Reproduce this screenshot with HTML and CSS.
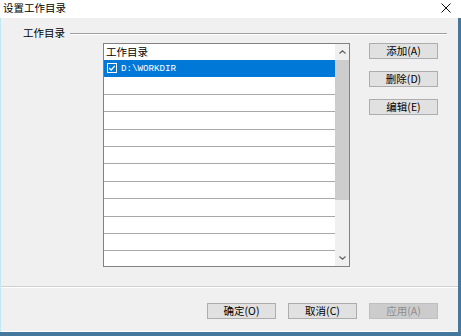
FILE: index.html
```html
<!DOCTYPE html>
<html>
<head>
<meta charset="utf-8">
<link rel="stylesheet" href="styles.css">
</head>
<body>
<div class="window">
  <div class="titlebar">
    <span class="title">设置工作目录</span>
    <svg class="close" width="10" height="10" viewBox="0 0 10 10"><path d="M0.5 0.5 L9.5 9.5 M9.5 0.5 L0.5 9.5" stroke="#111" stroke-width="1" fill="none"/></svg>
  </div>
  <div class="client">
    <div class="main">
      <div class="group-head"><span class="group-label">工作目录</span><div class="group-line"></div></div>
      <div class="content">
        <div class="listbox">
          <div class="list">
            <div class="list-header">工作目录</div>
            <div class="rows">
              <div class="row selected">
                <svg class="check" width="10" height="10" viewBox="0 0 10 10"><rect x="0.5" y="0.5" width="9" height="9" fill="#0078d7" stroke="#fff" stroke-width="1"/><path d="M2.2 5 L4.2 7 L7.8 2.8" stroke="#fff" stroke-width="1.3" fill="none"/></svg>
                <span class="path">D:\WORKDIR</span>
              </div>
              <div class="row"></div>
              <div class="row"></div>
              <div class="row"></div>
              <div class="row"></div>
              <div class="row"></div>
              <div class="row"></div>
              <div class="row"></div>
              <div class="row"></div>
              <div class="row"></div>
              <div class="row"></div>
              <div class="row"></div>
            </div>
          </div>
          <div class="scrollbar">
            <div class="sb-btn"><svg width="7" height="4" viewBox="0 0 7 4"><path d="M0.5 3.5 L3.5 0.8 L6.5 3.5" stroke="#606060" stroke-width="1.2" fill="none"/></svg></div>
            <div class="sb-track"><div class="sb-thumb"></div></div>
            <div class="sb-btn"><svg width="7" height="4" viewBox="0 0 7 4"><path d="M0.5 0.5 L3.5 3.2 L6.5 0.5" stroke="#606060" stroke-width="1.2" fill="none"/></svg></div>
          </div>
        </div>
        <div class="side-buttons">
          <div class="btn">添加(A)</div>
          <div class="btn">删除(D)</div>
          <div class="btn">编辑(E)</div>
        </div>
      </div>
    </div>
    <div class="separator"></div>
    <div class="footer">
      <div class="btn">确定(O)</div>
      <div class="btn">取消(C)</div>
      <div class="btn disabled">应用(A)</div>
    </div>
  </div>
  <div class="bottom-border"></div>
</div>
</body>
</html>
```
FILE: styles.css
```css
html, body {
  margin: 0;
  padding: 0;
  background: #f0f0f0;
}
body {
  font-family: "Noto Sans CJK SC", "DejaVu Sans", sans-serif;
  font-size: 10.5px;
  color: #000;
}
.window {
  width: 461px;
  height: 336px;
  display: flex;
  flex-direction: column;
  overflow: hidden;
}
.titlebar {
  height: 18px;
  background: #fff;
  display: flex;
  align-items: center;
  justify-content: space-between;
  padding: 0 10px 0 3px;
  box-sizing: border-box;
}
.title {
  font-size: 10.5px;
  line-height: 14px;
  margin-top: -2px;
}
.close {
  margin-top: -2px;
}
.client {
  height: 314px;
  background: #f0f0f0;
  border-left: 1px solid #c4e8f0;
  border-right: 3px solid #44789c;
  display: flex;
  flex-direction: column;
}
.main {
  height: 268px;
  padding: 9px 11px 0 22px;
  box-sizing: border-box;
}
.group-head {
  height: 12px;
  display: flex;
  align-items: center;
}
.group-label {
  line-height: 12px;
  margin-right: 5px;
}
.group-line {
  flex: 1;
  border-top: 1px solid #a0a0a0;
  border-bottom: 1px solid #fff;
  margin-top: 2px;
}
.content {
  margin: 4px 0 0 80px;
  display: flex;
  gap: 19px;
}
.listbox {
  width: 247px;
  height: 224px;
  border: 1px solid #828282;
  box-sizing: border-box;
  background: #fff;
  display: flex;
}
.list {
  flex: 1;
  overflow: hidden;
}
.list-header {
  height: 16px;
  line-height: 16px;
  padding-left: 2px;
  background: #fff;
}
.rows {
  display: flex;
  flex-direction: column;
}
.row {
  height: 17.4px;
  flex: none;
  box-sizing: border-box;
  border-bottom: 1px solid #a8a8a8;
  display: flex;
  align-items: center;
}
.row.selected {
  background: #0078d7;
  border-bottom-color: #0078d7;
  color: #fff;
}
.check {
  margin-left: 3px;
  margin-right: 4px;
}
.path {
  font-family: "Liberation Mono", monospace;
  font-size: 9.2px;
}
.scrollbar {
  width: 14px;
  background: #f0f0f0;
  display: flex;
  flex-direction: column;
}
.sb-btn {
  height: 16px;
  display: flex;
  align-items: center;
  justify-content: center;
}
.sb-track {
  flex: 1;
}
.sb-thumb {
  height: 140px;
  background: #cdcdcd;
}
.side-buttons {
  display: flex;
  flex-direction: column;
  gap: 12px;
}
.btn {
  width: 69px;
  height: 16px;
  box-sizing: border-box;
  border: 1px solid #adadad;
  background: #e1e1e1;
  text-align: center;
  line-height: 14px;
  font-size: 10.5px;
}
.btn.disabled {
  background: #cccccc;
  border-color: #bfbfbf;
  color: #8c8c8c;
}
.separator {
  height: 2px;
  border-top: 1px solid #d0d0d0;
  border-bottom: 1px solid #fff;
  box-sizing: border-box;
}
.footer {
  flex: 1;
  display: flex;
  justify-content: flex-end;
  gap: 12px;
  padding: 15px 20px 0 0;
  border-bottom: 1px solid #fff;
}
.bottom-border {
  height: 4px;
  background: #44789c;
}
```
